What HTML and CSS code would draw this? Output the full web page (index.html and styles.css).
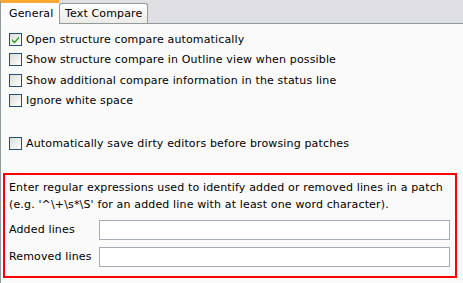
FILE: index.html
```html
<!DOCTYPE html>
<html>
  <head>
    <meta charset="UTF-8">
    <title>Compare/Patch</title>
	<link rel="stylesheet" href="styles.css">
  </head>
  <body>
	<div class="tabs">
		<div class="tab active">General</div>
		<div class="tab">Text Compare</div>
	</div>
	<div class="panel">
		<div class="checks">
			<label class="check"><span class="box on"><svg width="11" height="11" viewBox="0 0 11 11"><path d="M2 5 L4.5 7.5 L9 2.5 L9 4.5 L4.5 9.5 L2 7 Z" fill="#21a121"/></svg></span>Open structure compare automatically</label>
			<label class="check"><span class="box"></span>Show structure compare in Outline view when possible</label>
			<label class="check"><span class="box"></span>Show additional compare information in the status line</label>
			<label class="check"><span class="box"></span>Ignore white space</label>
		</div>
		<label class="check single"><span class="box"></span>Automatically save dirty editors before browsing patches</label>
		<div class="patch">
			<p class="hint">Enter regular expressions used to identify added or removed lines in a patch<br>(e.g. '^\+\s*\S' for an added line with at least one word character).</p>
			<div class="field">
				<span class="name">Added lines</span>
				<input type="text">
			</div>
			<div class="field">
				<span class="name">Removed lines</span>
				<input type="text">
			</div>
		</div>
	</div>
  </body>
</html>
```

FILE: styles.css
```css
body {
	background: #e0dfe3;
	margin: 0;
	font-family: "DejaVu Sans", Verdana, sans-serif;
	font-size: 11px;
	letter-spacing: 0.15px;
	color: #000;
	width: 463px;
	height: 283px;
	overflow: hidden;
}
.tabs {
	display: flex;
	align-items: flex-end;
	height: 23px;
}
.tab {
	box-sizing: border-box;
	height: 20px;
	width: 89px;
	padding: 0 0 0 5px;
	line-height: 20px;
	border: 1px solid #919b9c;
	border-bottom: none;
	border-radius: 3px 3px 0 0;
	background: linear-gradient(#fefefe, #ecebe6);
}
.tab.active {
	height: 24px;
	margin-bottom: -1px;
	width: 59px;
	padding: 0 0 0 8px;
	line-height: 22px;
	background: #fcfcfe;
	border-top: 3px solid #f8a830;
	border-right: none;
	border-radius: 0;
	position: relative;
	z-index: 1;
}
.panel {
	height: 260px;
	box-sizing: border-box;
	border-top: 1px solid #919b9c;
	border-left: 1px solid #919b9c;
	background: #fafafa;
	padding: 9px 0 0 8px;
}
.checks {
	display: flex;
	flex-direction: column;
	gap: 7.4px;
}
.check {
	display: flex;
	align-items: center;
	gap: 4px;
	height: 13px;
}
.check.single {
	margin-top: 29.5px;
}
.box {
	box-sizing: border-box;
	width: 13px;
	height: 13px;
	border: 1px solid #1c5180;
	background: linear-gradient(135deg, #dcdcd7, #fff);
	display: flex;
	align-items: center;
	justify-content: center;
}
.patch {
	margin: 23px 0 0 -6px;
	width: 454px;
	height: 105px;
	box-sizing: border-box;
	border: 2px solid #f00;
	padding: 4px 5px 0 4px;
}
.hint {
	margin: 0 0 7px;
	line-height: 17px;
}
.field {
	display: flex;
	align-items: center;
	height: 20px;
	margin-bottom: 7px;
}
.name {
	width: 90px;
}
input {
	box-sizing: border-box;
	width: 352px;
	height: 20px;
	border: 1px solid #a5acb5;
	background: #fff;
	margin: 0;
}
```
